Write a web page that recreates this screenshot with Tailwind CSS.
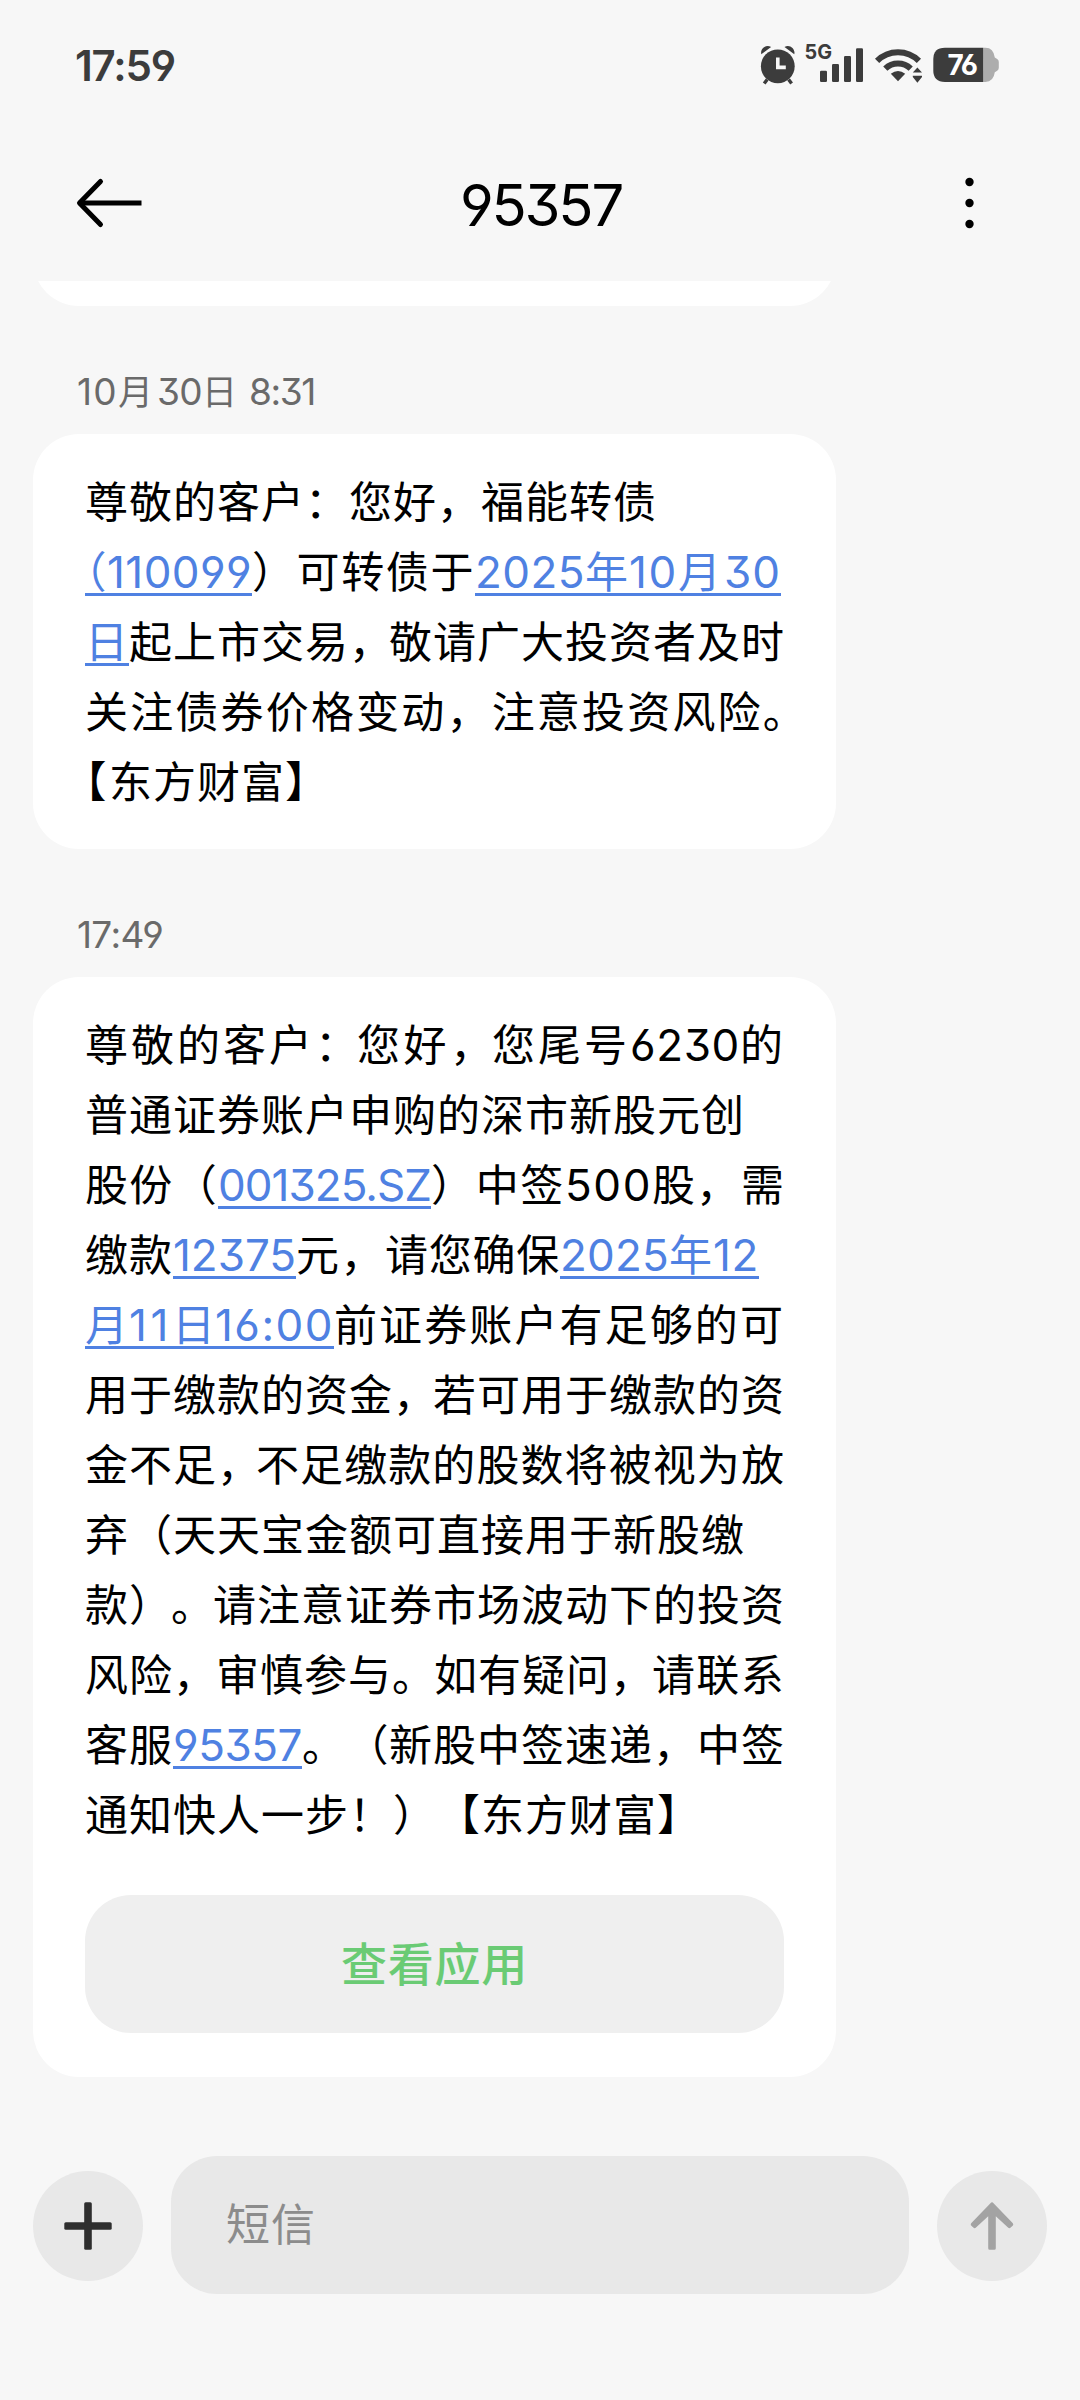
<!DOCTYPE html>
<html lang="zh-CN">
  <head>
    <meta charset="UTF-8">
    <meta name="viewport" content="width=device-width, initial-scale=1.0">
    <title>95357</title>
    <script src="https://cdn.jsdelivr.net/npm/@tailwindcss/browser@4"></script>
  </head>
  <body class="bg-[#f7f7f7]">
    <div class="flex h-[2400px] w-[1080px] flex-col overflow-hidden bg-[#f7f7f7] whitespace-nowrap text-black [font-family:Inter,'Noto_Sans_CJK_SC',sans-serif] [font-feature-settings:'cv03','cv04','cv09'] [text-spacing-trim:space-all]">

      <!-- 状态栏 -->
      <div class="flex h-[130px] shrink-0 items-start justify-between pl-[75px] pr-[60px]">
        <div class="pt-[46px] text-[42px] leading-[40px] font-semibold text-[#3c3c3c]"><span data-w="100">17:59</span></div>
        <svg class="mt-[30px] h-[70px] w-[280px]" viewBox="0 0 280 70" fill="#3c3c3c">
          <!-- 闹钟 -->
          <circle cx="37.8" cy="36.3" r="16.9" />
          <path d="M21.3 24.2c-1.4-5.6 5-10.6 9.8-7.2zM54.3 24.2c1.4-5.6-5-10.6-9.8-7.2z" />
          <path d="M27.2 49.5l-3 4M48.6 49.5l3 4" stroke="#3c3c3c" stroke-width="3.4" />
          <path d="M37.8 27.5v9.9h8" fill="none" stroke="#f7f7f7" stroke-width="3.6" />
          <!-- 信号 -->
          <text x="64.5" y="29" font-size="20.5" font-weight="700" textLength="27.5" lengthAdjust="spacingAndGlyphs">5G</text>
          <rect x="80" y="40.7" width="7" height="11.3" rx="1.2" />
          <rect x="92" y="34" width="7" height="18" rx="1.2" />
          <rect x="104" y="26" width="7" height="26" rx="1.2" />
          <rect x="116" y="18.3" width="7" height="33.7" rx="1.2" />
          <!-- WiFi -->
          <path d="M137.1 30.9a29.5 29.5 0 0 1 41.8 0M145.3 38.7a18.3 18.3 0 0 1 25.4 0" fill="none" stroke="#3c3c3c" stroke-width="6" />
          <path d="M158 51.2l-7.2-7.4q7.2-5.4 14.4 0z" />
          <path d="M177.4 37.5l4.6 5.1h-9.2zM177.4 52.7l4.6-5.7v-1.3h-9.2v1.3z" />
          <!-- 电池 -->
          <path d="M243.5 17.7h2q8 0 9.3 9.8l2.4 1.6q1.6 1.2 1.6 3v5.6q0 1.8-1.6 3l-2.4 1.6q-1.3 9.6-9.3 9.6h-2z" fill="#adadad" />
          <path d="M243.3 17.7V51.9H205q-11.7 0-11.7-11.4V29.1q0-11.4 11.7-11.4z" />
          <text x="207.5" y="45.4" font-size="28" font-weight="700" fill="#fff" textLength="30.5" lengthAdjust="spacing">76</text>
        </svg>
      </div>

      <!-- 标题栏 -->
      <div class="flex h-[151px] shrink-0 items-center pb-[5px] pl-[74px] pr-[101px]">
        <svg class="h-14 w-[72px] shrink-0" viewBox="0 0 72 56" fill="none" stroke="#000" stroke-width="5">
          <path d="M6 28h61.5" />
          <path d="M26.500 6.500L5.500 28l21 21.500" stroke-linejoin="round" stroke-linecap="round" />
        </svg>
        <h1 class="grow pt-[4px] pr-[23px] text-center text-[58px] leading-[64px]"><span data-w="162">95357</span></h1>
        <svg class="h-14 w-5 shrink-0" viewBox="0 0 20 56">
          <circle cx="10.5" cy="7" r="4.200" />
          <circle cx="10.5" cy="28" r="4.200" />
          <circle cx="10.5" cy="49" r="4.200" />
        </svg>
      </div>

      <!-- 消息列表 -->
      <div class="flex h-[1875px] shrink-0 flex-col overflow-hidden pl-[33px]">
        <div class="h-[25px] w-[803px] shrink-0 overflow-hidden">
          <div class="-mt-[75px] h-[100px] rounded-[46px] bg-white"></div>
        </div>

        <div class="h-[128px] shrink-0 pl-[44px] pt-[66px] text-[37px] leading-[40px] text-[#6a6a6a]"><span data-w="41">10</span><span data-w="39" class="text-[35px]">月</span><span data-w="45">30</span><span data-w="38" class="text-[35px]">日</span><span data-w="75" class="whitespace-pre"> 8:31</span></div>

        <div class="h-[415px] w-[803px] shrink-0 rounded-[46px] bg-white pl-[52px] pt-[33px] text-[43px] leading-[70px] [&_a]:text-[#4f81e2] [&_a]:underline [&_a]:decoration-[2.5px] [&_a]:underline-offset-[5px] [&_a]:[text-decoration-skip-ink:none] [&_b]:text-[44px] [&_b]:font-normal">
          <p><span data-w="572">尊敬的客户：您好，福能转债</span></p>
          <p><a><span data-w="22" class="[font-feature-settings:'halt']">（</span><b data-w="145">110099</b></a><span data-w="223">）可转债于</span><a><b data-w="110">2025</b><span data-w="44">年</span><b data-w="49">10</b><span data-w="46">月</span><b data-w="57">30</b></a></p>
          <p><a><span data-w="44">日</span></a><span data-w="220">起上市交易</span><span data-w="40">，</span><span data-w="396">敬请广大投资者及时</span></p>
          <p><span data-w="723">关注债券价格变动，注意投资风险。</span></p>
          <p><span data-w="24" class="[font-feature-settings:'halt']">【</span><span data-w="220">东方财富】</span></p>
        </div>

        <div class="h-[128px] shrink-0 pl-[44px] pt-[66px] text-[37px] leading-[40px] text-[#6a6a6a]"><span data-w="86">17:49</span></div>

        <div class="h-[1100px] w-[803px] shrink-0 rounded-[46px] bg-white pl-[52px] pt-[33px] text-[43px] leading-[70px] [&_a]:text-[#4f81e2] [&_a]:underline [&_a]:decoration-[2.5px] [&_a]:underline-offset-[5px] [&_a]:[text-decoration-skip-ink:none] [&_b]:text-[44px] [&_b]:font-normal">
          <p><span data-w="230">尊敬的客户</span><span data-w="42">：</span><span data-w="93">您好</span><span data-w="42">，</span><span data-w="138">您尾号</span><b data-w="110">6230</b><span data-w="45">的</span></p>
          <p><span data-w="660">普通证券账户申购的深市新股元创</span></p>
          <p><span data-w="133">股份（</span><a><b data-w="213">001325.SZ</b></a><span data-w="134">）中签</span><b data-w="87">500</b><span data-w="44">股</span><span data-w="45">，</span><span data-w="44">需</span></p>
          <p><span data-w="88">缴款</span><a><b data-w="123">12375</b></a><span data-w="89">元，</span><span data-w="175">请您确保</span><a><b data-w="109">2025</b><span data-w="44">年</span><b data-w="46">12</b></a></p>
          <p><a><span data-w="44">月</span><b data-w="43">11</b><span data-w="43">日</span><b data-w="119">16:00</b></a><span data-w="451">前证券账户有足够的可</span></p>
          <p><span data-w="308">用于缴款的资金</span><span data-w="40">，</span><span data-w="352">若可用于缴款的资</span></p>
          <p><span data-w="132">金不足</span><span data-w="39">，</span><span data-w="529">不足缴款的股数将被视为放</span></p>
          <p><span data-w="660">弃（天天宝金额可直接用于新股缴</span></p>
          <p><span data-w="44">款</span><span data-w="84">）。</span><span data-w="572">请注意证券市场波动下的投资</span></p>
          <p><span data-w="88">风险</span><span data-w="43">，</span><span data-w="176">审慎参与</span><span data-w="42">。</span><span data-w="176">如有疑问</span><span data-w="42">，</span><span data-w="133">请联系</span></p>
          <p><span data-w="88">客服</span><a><b data-w="129">95357</b></a><span data-w="87">。（</span><span data-w="264">新股中签速递</span><span data-w="44">，</span><span data-w="88">中签</span></p>
          <p><span data-w="616">通知快人一步！）【东方财富】</span></p>
          <button class="mt-[45px] flex h-[138px] w-[699px] items-center justify-center rounded-[46px] bg-[#efefef] text-[46px] font-medium text-[#6acb74]"><span data-w="187">查看应用</span></button>
        </div>
      </div>

      <!-- 输入栏 -->
      <div class="flex h-[138px] shrink-0 items-center gap-[28px] px-[33px]">
        <button class="mt-[2px] flex size-[110px] shrink-0 items-center justify-center rounded-full bg-[#e8e8e8]">
          <svg class="size-12" viewBox="0 0 48 48" fill="#2e2e2e">
            <rect x="0.300" y="20.200" width="47.400" height="7.600" rx="1.500" />
            <rect x="20.200" y="0.300" width="7.600" height="47.400" rx="1.500" />
          </svg>
        </button>
        <div class="flex h-[138px] grow items-center rounded-[46px] bg-[#e8e8e8] pl-[55px] text-[44px] text-[#8c8c8c]"><span data-w="90">短信</span></div>
        <button class="mt-[2px] flex size-[110px] shrink-0 items-center justify-center rounded-full bg-[#e8e8e8]">
          <svg class="size-12" viewBox="0 0 48 48" fill="#a3a3a3">
            <path d="M23.200 0.600q0.800-0.700 1.600 0l19.800 20.400q1.300 1.400 0 2.700l-1.900 1.900q-1.400 1.200-2.700 0L27.800 14.200V46.200q0 1.500-1.500 1.500h-4.600q-1.500 0-1.500-1.500V14.200L8 25.600q-1.300 1.200-2.700 0l-1.900-1.900q-1.300-1.300 0-2.700z" />
          </svg>
        </button>
      </div>
    </div>

    <script>
      // 按 data-w 指定的宽度分配字间距
      function fitText() {
        document.querySelectorAll('[data-w]').forEach(el => {
          el.style.letterSpacing = '0px';
          const natural = el.getBoundingClientRect().width;
          const count = [...el.textContent].length;
          el.style.letterSpacing = (Number(el.dataset.w) - natural) / count + 'px';
        });
      }

      // 样式生效后标题尺寸会变化，届时重新计算
      new ResizeObserver(fitText).observe(document.querySelector('h1').parentElement);
      window.addEventListener('load', fitText);
    </script>
  </body>
</html>
